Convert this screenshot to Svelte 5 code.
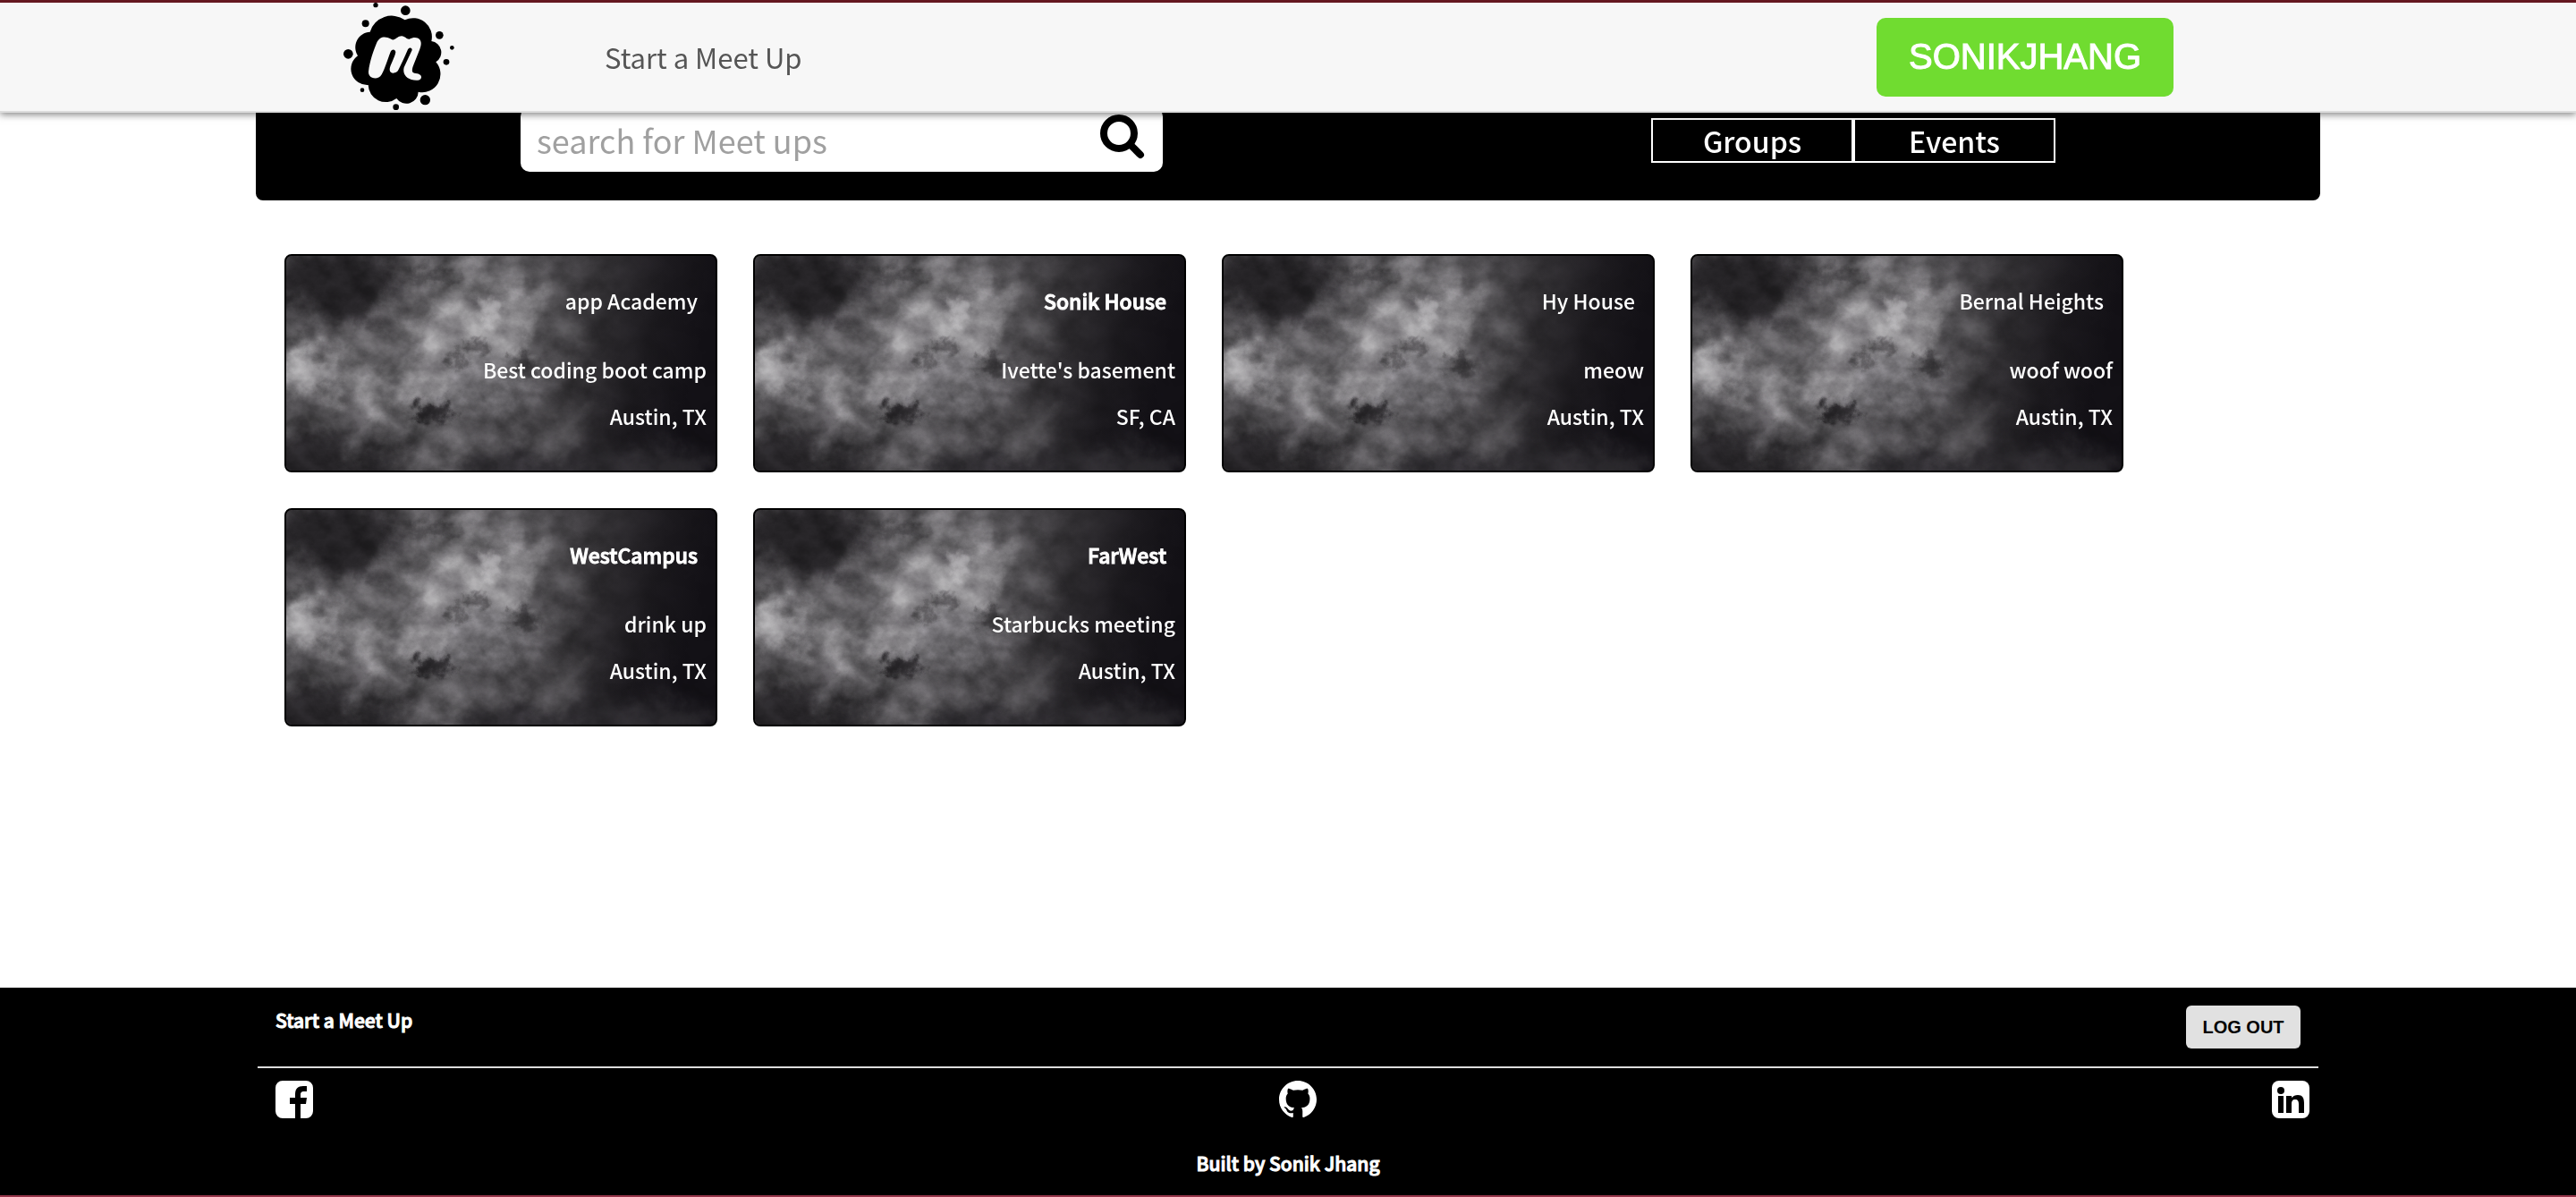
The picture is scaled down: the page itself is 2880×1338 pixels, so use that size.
<script>
  const groups = [
    { name: 'app Academy', about: 'Best coding boot camp', place: 'Austin, TX' },
    { name: 'Sonik House', about: "Ivette's basement", place: 'SF, CA', strongName: true },
    { name: 'Hy House', about: 'meow', place: 'Austin, TX' },
    { name: 'Bernal Heights', about: 'woof woof', place: 'Austin, TX' },
    { name: 'WestCampus', about: 'drink up', place: 'Austin, TX', strongName: true },
    { name: 'FarWest', about: 'Starbucks meeting', place: 'Austin, TX', strongName: true }
  ];
  let query = $state('');
</script>

<svg class="defs" width="0" height="0" aria-hidden="true">
  <defs>
    <filter id="cloud" x="-10%" y="-10%" width="120%" height="120%" color-interpolation-filters="sRGB">
      <feGaussianBlur stdDeviation="12" result="soft" />
      <feTurbulence type="fractalNoise" baseFrequency="0.022" numOctaves="6" seed="8" result="n" />
      <feDisplacementMap in="soft" in2="n" scale="70" xChannelSelector="R" yChannelSelector="G" />
    </filter>
    <filter id="spots" x="-40%" y="-40%" width="180%" height="180%" color-interpolation-filters="sRGB">
      <feGaussianBlur stdDeviation="4" result="soft" />
      <feTurbulence type="fractalNoise" baseFrequency="0.07" numOctaves="5" seed="3" result="n" />
      <feDisplacementMap in="soft" in2="n" scale="30" xChannelSelector="R" yChannelSelector="G" />
    </filter>
    <filter id="grain" x="0" y="0" width="100%" height="100%" color-interpolation-filters="sRGB">
      <feTurbulence type="fractalNoise" baseFrequency="0.03 0.036" numOctaves="7" seed="21" />
      <feColorMatrix values="1.7 0 0 0 -0.35  1.7 0 0 0 -0.35  1.7 0 0 0 -0.35  0 0 0 0 1" />
    </filter>
    <linearGradient id="night" x1="0" x2="1" y1="0" y2="0.12">
      <stop offset="0" stop-color="#4c4a4d" />
      <stop offset="0.5" stop-color="#5a585b" />
      <stop offset="0.72" stop-color="#353336" />
      <stop offset="0.88" stop-color="#1b191d" />
      <stop offset="1" stop-color="#121015" />
    </linearGradient>
    <linearGradient id="fade" x1="0" x2="1" y1="0" y2="0">
      <stop offset="0.55" stop-color="#fff" />
      <stop offset="0.9" stop-color="#333" />
    </linearGradient>
    <mask id="leftward"><rect width="480" height="240" fill="url(#fade)" /></mask>
    <symbol id="nebula" viewBox="0 0 480 240" preserveAspectRatio="none">
      <rect width="480" height="240" fill="url(#night)" />
      <g filter="url(#cloud)">
        <ellipse cx="55" cy="30" rx="75" ry="42" fill="#262427" />
        <ellipse cx="30" cy="240" rx="110" ry="34" fill="#252326" />
        <ellipse cx="330" cy="240" rx="150" ry="26" fill="#2d2b2f" />
        <ellipse cx="110" cy="95" rx="60" ry="22" fill="#605e61" />
        <ellipse cx="195" cy="16" rx="68" ry="14" fill="#727073" />
        <ellipse cx="225" cy="70" rx="72" ry="42" fill="#858386" />
        <ellipse cx="205" cy="110" rx="64" ry="42" fill="#949295" />
        <ellipse cx="24" cy="128" rx="48" ry="24" fill="#a09ea1" />
        <ellipse cx="120" cy="150" rx="60" ry="28" fill="#828083" />
        <ellipse cx="225" cy="150" rx="60" ry="28" fill="#727074" />
        <ellipse cx="300" cy="85" rx="26" ry="48" fill="#504e51" />
        <ellipse cx="270" cy="190" rx="70" ry="24" fill="#4a484b" />
      </g>
      <g filter="url(#spots)">
        <ellipse cx="163" cy="176" rx="20" ry="13" fill="#2b292c" />
        <ellipse cx="212" cy="100" rx="14" ry="6" fill="#504e51" />
        <ellipse cx="192" cy="116" rx="9" ry="8" fill="#4d4b4e" />
        <ellipse cx="268" cy="124" rx="22" ry="9" fill="#434144" />
        <ellipse cx="155" cy="22" rx="42" ry="6" fill="#454346" />
        <ellipse cx="228" cy="64" rx="10" ry="16" fill="#a9a7aa" />
      </g>
      <g mask="url(#leftward)" class="veil"><rect width="480" height="240" filter="url(#grain)" /></g>
    </symbol>
  </defs>
</svg>

<div class="page">
  <header>
    <a class="logo" href="#home" aria-label="Meetup home">
      <svg viewBox="0 9 420 363" aria-hidden="true">
        <path d="M113 107A76 76 0 0 1 230 67A63 63 0 0 1 319 138A38 38 0 0 1 334 208A61 61 0 0 1 275 308A40 40 0 0 1 202 330A59 59 0 0 1 107 285A54 54 0 0 1 72 187A52 52 0 0 1 113 107Z" />
        <g>
          <circle cx="132" cy="17" r="8" /><circle cx="232" cy="35" r="16" />
          <circle cx="98" cy="79" r="12" /><circle cx="346" cy="118" r="13" />
          <circle cx="388" cy="160" r="7" /><circle cx="369" cy="208" r="10" />
          <circle cx="40" cy="181" r="16" /><circle cx="87" cy="302" r="7" />
          <circle cx="298" cy="335" r="17" /><circle cx="200" cy="359" r="10" />
        </g>
        <path fill="#f7f7f7" d="M108 240C112 205 125 170 135 145C143 125 158 122 172 126C182 129 186 134 193 133C202 130 207 121 219 121C232 122 235 132 245 131C258 125 272 124 280 133C287 142 284 155 280 165L260 215C253 232 252 243 262 245C275 246 286 250 285 260C283 271 265 271 252 267C232 262 222 245 227 226L254 168C255 160 245 157 240 166C230 190 218 215 208 235C202 247 180 250 179 234C178 222 198 190 199 175C197 163 185 165 181 176C172 200 163 230 152 250C145 263 130 264 122 261C112 258 107 250 108 240Z" />
      </svg>
    </a>
    <a class="start" href="#new">Start a Meet Up</a>
    <button class="user" type="button">SONIKJHANG</button>
  </header>

  <section class="hero">
    <form class="search" onsubmit={(e) => e.preventDefault()}>
      <input type="text" aria-label="Search for meet ups" placeholder="search for Meet ups" bind:value={query} />
      <button type="submit" aria-label="Search">
        <svg viewBox="0 0 50 50" fill="none" stroke="#000" stroke-linecap="round" aria-hidden="true">
          <circle cx="21" cy="21" r="17" stroke-width="8" />
          <path d="M35 35L45 45" stroke-width="8" />
        </svg>
      </button>
    </form>
    <nav class="tabs">
      <button type="button">Groups</button>
      <button type="button">Events</button>
    </nav>
  </section>

  <main>
    {#each groups as g}
      <a class="card" href="#group">
        <svg class="bg" aria-hidden="true"><use href="#nebula" width="100%" height="100%" /></svg>
        <div class="info">
          <h2 class:strong={g.strongName}>{g.name}</h2>
          <p>{g.about}</p>
          <p>{g.place}</p>
        </div>
      </a>
    {/each}
  </main>

  <footer>
    <div class="inner">
      <div class="top">
        <a class="strong" href="#new">Start a Meet Up</a>
        <button type="button">LOG OUT</button>
      </div>
      <div class="social">
        <a href="#facebook" aria-label="Facebook">
          <svg viewBox="0 0 42 42" aria-hidden="true">
            <path fill="#fff" d="M8 0H34A8 8 0 0 1 42 8V34A8 8 0 0 1 34 42H28V26H34L35 19H28V16C28 13 29 12 32 12H35V6H31C25 6 22 9 22 15V19H16V26H22V42H8A8 8 0 0 1 0 34V8A8 8 0 0 1 8 0Z" />
          </svg>
        </a>
        <a class="github" href="#github" aria-label="GitHub">
          <svg viewBox="0 0 16 16" aria-hidden="true">
            <path fill="#fff" d="M8 0C3.58 0 0 3.58 0 8c0 3.54 2.29 6.53 5.47 7.59.4.07.55-.17.55-.38 0-.19-.01-.82-.01-1.49-2.01.37-2.53-.49-2.69-.94-.09-.23-.48-.94-.82-1.13-.28-.15-.68-.52-.01-.53.63-.01 1.08.58 1.23.82.72 1.21 1.87.87 2.33.66.07-.52.28-.87.51-1.07-1.78-.2-3.64-.89-3.64-3.95 0-.87.31-1.59.82-2.15-.08-.2-.36-1.02.08-2.12 0 0 .67-.21 2.2.82.64-.18 1.32-.27 2-.27s1.36.09 2 .27c1.53-1.04 2.2-.82 2.2-.82.44 1.1.16 1.92.08 2.12.51.56.82 1.27.82 2.15 0 3.07-1.87 3.75-3.65 3.95.29.25.54.73.54 1.48 0 1.07-.01 1.93-.01 2.2 0 .21.15.46.55.38A8.01 8.01 0 0 0 16 8c0-4.42-3.58-8-8-8z" />
          </svg>
        </a>
        <a href="#linkedin" aria-label="LinkedIn">
          <svg viewBox="0 0 42 42" aria-hidden="true">
            <rect width="42" height="42" rx="8" fill="#fff" />
            <circle cx="10" cy="11" r="4" />
            <path d="M7 17H13V36H7ZM16 17H22V19C24 17 26 16 29 16C34 16 36 19 36 25V36H30V26C30 23 29 21 26 21C23 21 22 23 22 26V36H16Z" />
          </svg>
        </a>
      </div>
      <p class="credit strong">Built by Sonik Jhang</p>
    </div>
  </footer>
</div>

<style>
  :global(body) {
    background: #fff;
    font-family: 'Noto Sans CJK JP', 'Noto Sans', sans-serif;
  }
  .defs { position: absolute; }
  .page {
    min-height: 100vh;
    display: flex;
    flex-direction: column;
  }
  a { color: inherit; text-decoration: none; }
  button { cursor: pointer; }
  svg { display: block; }

  header {
    position: sticky;
    top: 0;
    z-index: 2;
    display: flex;
    align-items: center;
    padding: 0 450px 0 376px;
    background: #f7f7f7;
    border-top: 3px solid #651820;
    border-bottom: 2px solid #ddd;
    box-shadow: 0 2px 8px rgba(0, 0, 0, 0.5);
  }
  .logo svg { width: 140px; height: 121px; }
  .start {
    margin-left: 160px;
    font-size: 31px;
    line-height: 44px;
    color: #555;
  }
  .user {
    margin-left: auto;
    padding: 0 36px;
    height: 88px;
    border: 0;
    border-radius: 10px;
    background: #70dc30;
    color: #fff;
    font: 40px 'Liberation Sans', Arial, sans-serif;
    -webkit-text-stroke: 1px #fff;
  }

  .hero {
    width: 80%;
    box-sizing: content-box;
    align-self: center;
    display: flex;
    align-items: flex-start;
    justify-content: space-between;
    margin-top: -8px;
    padding-bottom: 30px;
    background: #000;
    border: 2px solid #000;
    border-radius: 0 0 8px 8px;
  }
  .search {
    display: flex;
    align-items: center;
    width: 718px;
    height: 72px;
    margin-left: 294px;
    padding: 0 20px 0 18px;
    box-sizing: border-box;
    background: #fff;
    border-radius: 10px;
  }
  .search input {
    flex: 1;
    min-width: 0;
    height: 60px;
    padding: 0;
    border: 0;
    outline: 0;
    background: none;
    font: 36px 'Noto Sans CJK JP', sans-serif;
  }
  .search input::placeholder { color: #a0a0a0; opacity: 1; }
  .search button { padding: 0 0 6px; border: 0; background: none; }
  .search button svg { width: 50px; height: 50px; }
  .tabs { display: flex; margin: 12px 294px 0 0; }
  .tabs button {
    width: 226px;
    height: 50px;
    padding: 0;
    border: 2px solid #fff;
    background: #000;
    color: #fff;
    font: 500 32px/44px 'Noto Sans CJK JP', sans-serif;
  }

  main {
    width: 80%;
    box-sizing: border-box;
    align-self: center;
    display: grid;
    grid-template-columns: repeat(auto-fill, 484px);
    gap: 40px;
    padding: 60px 30px;
  }
  .card {
    display: grid;
    height: 240px;
    overflow: hidden;
    border: 2px solid #000;
    border-radius: 8px;
    background: #000;
    color: #fff;
    text-align: right;
    font-size: 23px;
    line-height: 32px;
    font-weight: 500;
  }
  .bg, .info { grid-area: 1 / 1; }
  .bg { width: 100%; height: 240px; }
  .veil { mix-blend-mode: overlay; opacity: 0.3; }
  .info {
    position: relative;
    padding: 34px 10px 0;
  }
  h2 {
    margin: 0 10px 45px 0;
    font-size: 23px;
    font-weight: 500;
  }
  .info p { margin: 0 0 20px; }
  .strong { -webkit-text-stroke: 1px #fff; }

  footer {
    margin-top: auto;
    background: #000;
    border-bottom: 2px solid #96364a;
    color: #fff;
    font-size: 21px;
    line-height: 32px;
    font-weight: 500;
  }
  .inner { width: 80%; margin: 0 auto; }
  .top {
    display: flex;
    align-items: flex-start;
    justify-content: space-between;
    padding: 20px;
    border-bottom: 2px solid #ddd;
  }
  .top button {
    width: 128px;
    height: 48px;
    padding: 0;
    border: 0;
    border-radius: 6px;
    background: #e1e1e1;
    font: bold 20px 'Liberation Sans', Arial, sans-serif;
  }
  .social {
    display: flex;
    justify-content: space-between;
    padding: 14px 10px 0 20px;
  }
  .social svg { width: 42px; height: 42px; }
  .github { padding-left: 12px; }
  .credit { margin: 0; padding: 34px 0 20px; text-align: center; }
</style>
